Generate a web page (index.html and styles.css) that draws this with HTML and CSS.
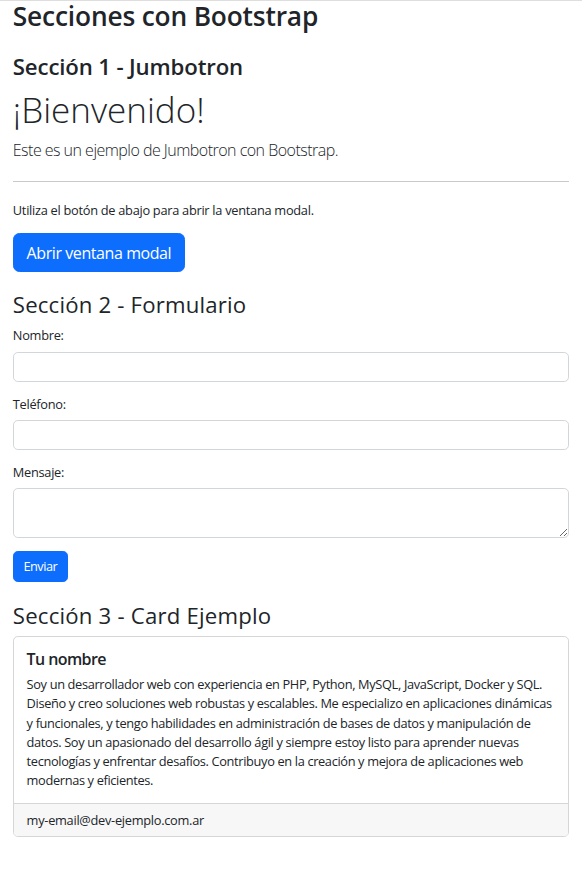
FILE: index.html
```html
<!DOCTYPE html>
<html lang="es">
<head>
<meta charset="utf-8">
<title>Secciones con Bootstrap</title>
<link rel="stylesheet" href="styles.css">
</head>
<body>
<div class="page">
  <h1 class="title">Secciones con Bootstrap</h1>

  <section class="jumbo">
    <h2 class="sec1">Sección 1 - Jumbotron</h2>
    <h1 class="display">¡Bienvenido!</h1>
    <p class="lead">Este es un ejemplo de Jumbotron con Bootstrap.</p>
    <hr class="rule">
    <p class="info">Utiliza el botón de abajo para abrir la ventana modal.</p>
    <button class="btn btn-lg" type="button">Abrir ventana modal</button>
  </section>

  <section class="form-sec">
    <h2 class="sec sec2">Sección 2 - Formulario</h2>
    <form class="form">
      <div class="group">
        <label class="label" for="nombre">Nombre:</label>
        <input class="control" id="nombre" type="text">
      </div>
      <div class="group">
        <label class="label" for="tel">Teléfono:</label>
        <input class="control" id="tel" type="tel">
      </div>
      <div class="group">
        <label class="label" for="msg">Mensaje:</label>
        <textarea class="control area" id="msg" rows="2"></textarea>
      </div>
      <button class="btn btn-sm-text" type="submit">Enviar</button>
    </form>
  </section>

  <section class="card-sec">
    <h2 class="sec sec3">Sección 3 - Card Ejemplo</h2>
    <div class="card">
      <div class="card-body">
        <h5 class="card-title">Tu nombre</h5>
        <p class="card-text">Soy un desarrollador web con experiencia en PHP, Python, MySQL, JavaScript, Docker y SQL. Diseño y creo soluciones web robustas y escalables. Me especializo en aplicaciones dinámicas y funcionales, y tengo habilidades en administración de bases de datos y manipulación de datos. Soy un apasionado del desarrollo ágil y siempre estoy listo para aprender nuevas tecnologías y enfrentar desafíos. Contribuyo en la creación y mejora de aplicaciones web modernas y eficientes.</p>
      </div>
      <div class="card-footer">my-email@dev-ejemplo.com.ar</div>
    </div>
  </section>
</div>
</body>
</html>
```
FILE: styles.css
```css
* { box-sizing: border-box; }
html, body { margin: 0; padding: 0; }
body {
  font-family: "Open Sans", "Noto Sans", sans-serif;
  font-size: 12.8px;
  line-height: 1.5;
  letter-spacing: -0.28px;
  color: #212529;
  background: #fff;
  border-top: 1px solid #dedede;
}
.page {
  padding: 0 12.8px 0;
}
h1, h2, h3, h5, p { margin: 0; }

.title {
  font-size: 26.3px;
  line-height: 31.6px;
  font-weight: 600;
  letter-spacing: -0.17px;
  margin-top: 0.3px;
}
.sec1 {
  font-size: 22.2px;
  line-height: 26.6px;
  font-weight: 600;
  letter-spacing: -0.14px;
  margin-top: 21.2px;
}
.display {
  font-size: 35px;
  line-height: 42px;
  font-weight: 300;
  letter-spacing: 0;
  margin-top: 8px;
}
.lead {
  font-size: 16px;
  line-height: 24px;
  font-weight: 300;
  letter-spacing: -0.52px;
  margin-top: 7.1px;
}
.rule {
  border: 0;
  border-top: 1px solid #c8c9ca;
  margin: 19.2px 0 0;
  height: 0;
}
.info {
  margin-top: 19.1px;
}
.btn {
  display: inline-block;
  font-family: inherit;
  font-size: 12.8px;
  line-height: 19.2px;
  letter-spacing: -0.28px;
  padding: 4.8px 9.6px;
  border: 1px solid #0d6efd;
  border-radius: 4.8px;
  background: #0d6efd;
  color: #fff;
  margin: 0;
}
.btn-sm-text { letter-spacing: -0.5px; }
.btn-lg {
  font-size: 16px;
  line-height: 24px;
  letter-spacing: -0.42px;
  padding: 6.4px 12.8px;
  border-radius: 6.4px;
  margin-top: 13px;
}
.sec {
  font-size: 22.2px;
  line-height: 26.6px;
  font-weight: 500;
}
.sec2 { letter-spacing: 0.18px; }
.sec3 { letter-spacing: 0.2px; }
.form-sec { margin-top: 19.7px; }
.form { margin-top: 8.1px; }
.group { margin-bottom: 12.8px; }
.label {
  display: block;
  margin-bottom: 6px;
}
.control {
  display: block;
  width: 100%;
  height: 30.4px;
  padding: 4.8px 9.6px;
  font-family: inherit;
  font-size: 12.8px;
  line-height: 19.2px;
  color: #212529;
  background: #fff;
  border: 1px solid #d3d6d9;
  border-radius: 4.8px;
  margin: 0;
}
.area {
  height: 49.6px;
  resize: vertical;
}
.card-sec { margin-top: 21.4px; }
.card {
  margin-top: 6.4px;
  border: 1px solid #d6d6d6;
  border-radius: 4.8px;
  overflow: hidden;
}
.card-body { padding: 12.8px; }
.card-title {
  font-size: 16px;
  line-height: 19.2px;
  font-weight: 600;
  letter-spacing: -0.6px;
  margin-bottom: 6.4px;
}
.card-text {
  line-height: 19.2px;
  letter-spacing: -0.35px;
}
.card-footer {
  padding: 6.4px 12.8px;
  background: #f7f7f7;
  border-top: 1px solid #d6d6d6;
  line-height: 19.2px;
}
```
